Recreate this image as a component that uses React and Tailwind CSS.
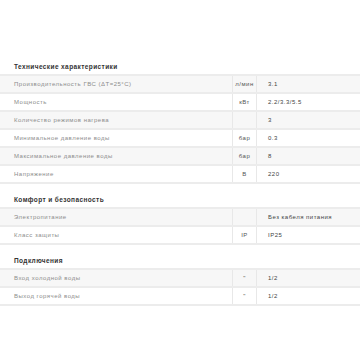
import React from 'react';

const sections = [
    {
        title: 'Технические характеристики',
        rows: [
            ['Производительность ГВС (ΔT=25°C)', 'л/мин', '3.1'],
            ['Мощность', 'кВт', '2.2/3.3/5.5'],
            ['Количество режимов нагрева', '', '3'],
            ['Минимальное давление воды', 'бар', '0.3'],
            ['Максимальное давление воды', 'бар', '8'],
            ['Напряжение', 'В', '220'],
        ],
    },
    {
        title: 'Комфорт и безопасность',
        rows: [
            ['Электропитание', '', 'Без кабеля питания'],
            ['Класс защиты', 'IP', 'IP25'],
        ],
    },
    {
        title: 'Подключения',
        rows: [
            ['Вход холодной воды', '"', '1/2'],
            ['Выход горячей воды', '"', '1/2'],
        ],
    },
];

export default function App() {
    return (
        <div className="w-[360px] h-[360px] overflow-hidden bg-white pt-[51px] font-['Liberation_Sans',Arial,sans-serif]">
            {sections.map((s) => (
                <div key={s.title}>
                    <div className="h-[23px] flex items-end pb-[4px] pl-[14px] text-[6.5px] leading-none font-bold tracking-[0.4px] text-[#333]">
                        {s.title}
                    </div>
                    <div className="border-t-2 border-[#ececec]">
                        {s.rows.map((r, i) => (
                            <div
                                key={r[0]}
                                className={`flex h-[18px] border-b-2 border-[#ececec] text-[6px] leading-none tracking-[0.5px] ${i % 2 === 0 ? 'bg-[#f7f7f7]' : 'bg-white'}`}
                            >
                                <div className="flex-1 flex items-center pl-[14px] text-[#8c8c8c]">{r[0]}</div>
                                <div className="w-[25px] flex items-center justify-center border-x border-[#e8e8e8] text-[#555]">{r[1]}</div>
                                <div className="w-[103px] flex items-center pl-[11px] text-[#444]">{r[2]}</div>
                            </div>
                        ))}
                    </div>
                </div>
            ))}
        </div>
    );
}
